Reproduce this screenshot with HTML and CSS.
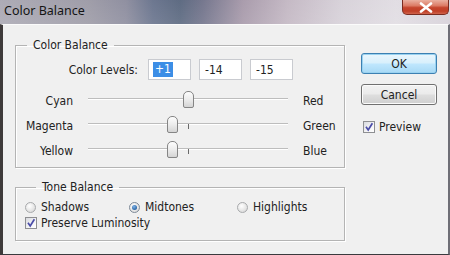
FILE: index.html
```html
<!DOCTYPE html>
<html>
<head>
<meta charset="utf-8">
<link rel="stylesheet" href="styles.css">
</head>
<body>
<div class="window">
  <div class="titlebar">
    <span class="title">Color Balance</span>
    <span class="close"><svg width="14" height="11" viewBox="0 0 14 11"><path d="M2 1.5 L12 9.5 M12 1.5 L2 9.5" stroke="#fff" stroke-width="2.6" stroke-linecap="round"/></svg></span>
  </div>
  <div class="client">
    <div class="main">
      <fieldset class="group cb">
        <legend>Color Balance</legend>
        <div class="levels">
          <span class="lvl-label">Color Levels:</span>
          <span class="field"><span class="sel">+1</span></span>
          <span class="field">-14</span>
          <span class="field">-15</span>
        </div>
        <div class="sliders">
          <span class="lab">Cyan</span>
          <div class="track"><span class="tick"></span><span class="thumb" style="left:95px"></span></div>
          <span class="rlab">Red</span>
          <span class="lab">Magenta</span>
          <div class="track"><span class="tick"></span><span class="thumb" style="left:79px"></span></div>
          <span class="rlab">Green</span>
          <span class="lab">Yellow</span>
          <div class="track"><span class="tick"></span><span class="thumb" style="left:79px"></span></div>
          <span class="rlab">Blue</span>
        </div>
      </fieldset>
      <fieldset class="group tb">
        <legend>Tone Balance</legend>
        <div class="radios">
          <span class="opt"><span class="radio"></span>Shadows</span>
          <span class="opt"><span class="radio on"></span>Midtones</span>
          <span class="opt"><span class="radio"></span>Highlights</span>
        </div>
        <div class="opt preserve"><span class="check"><svg width="10" height="10" viewBox="0 0 10 10"><path d="M2 4.8 L4.2 8 L8.4 1.2" fill="none" stroke="#4a4ca8" stroke-width="1.7"/></svg></span>Preserve Luminosity</div>
      </fieldset>
    </div>
    <div class="side">
      <div class="btn ok">OK</div>
      <div class="btn cancel">Cancel</div>
      <div class="opt preview"><span class="check"><svg width="10" height="10" viewBox="0 0 10 10"><path d="M2 4.8 L4.2 8 L8.4 1.2" fill="none" stroke="#4a4ca8" stroke-width="1.7"/></svg></span>Preview</div>
    </div>
  </div>
</div>
</body>
</html>
```

FILE: styles.css
```css
html, body {
  margin: 0;
  padding: 0;
}
body {
  width: 450px;
  height: 255px;
  overflow: hidden;
  font-family: "DejaVu Sans Condensed", "DejaVu Sans", sans-serif;
  font-stretch: condensed;
  font-size: 12px;
  color: #222222;
}
.window {
  width: 450px;
  height: 255px;
  display: flex;
  flex-direction: column;
  background: #55555a;
}
.titlebar {
  height: 24px;
  flex: none;
  display: flex;
  justify-content: space-between;
  align-items: flex-start;
  background:
    linear-gradient(180deg, rgba(255,255,255,0.05), rgba(255,255,255,0.12)),
    linear-gradient(90deg, #a9a7b2 0%, #9a98a4 20%, #8a8a9c 28%, #65708a 34%, #56647c 40%, #6e7088 45%, #a597a8 54%, #c2b6c2 64%, #d6d0d8 76%, #e0dce2 88%, #d6d0d8 100%);
}
.title {
  font-family: "Noto Sans", "Open Sans", sans-serif;
  font-stretch: normal;
  font-size: 12.5px;
  line-height: 16px;
  margin: 3px 0 0 4px;
  color: #141414;
}
.close {
  width: 47px;
  height: 15px;
  margin-right: 1px;
  box-sizing: border-box;
  border: 1px solid #7a2c20;
  border-top: none;
  border-radius: 0 0 5px 5px;
  background: linear-gradient(180deg, #eab0a0 0%, #dc7c66 40%, #c5452d 55%, #c04028 80%, #d0644c 100%);
  display: flex;
  align-items: center;
  justify-content: center;
}
.close svg { display: block; }
.client {
  flex: 1;
  display: flex;
  background: #f0f0f0;
  border-top: 1px solid #fbfbfb;
  border-left: 3px solid #3e3a3a;
  border-right: 2px solid #6e6e76;
  border-bottom: 1px solid #3a3a3e;
  padding: 13px 0 0 12px;
  box-sizing: border-box;
  gap: 16px;
}
.main {
  width: 330px;
  display: flex;
  flex-direction: column;
  gap: 12px;
}
.group {
  margin: 0;
  padding: 0;
  border: 1px solid #b4b4b4;
  box-shadow: inset 1px 1px 0 #ffffff, 1px 1px 0 #ffffff;
  min-width: 0;
}
.group legend {
  margin-left: 11px;
  padding: 0 6px;
  line-height: 14px;
  font-size: 12px;
}
.cb { padding-bottom: 4px; }
.levels {
  display: flex;
  align-items: center;
  margin-top: 7px;
  height: 21px;
}
.lvl-label {
  width: 122px;
  text-align: right;
  margin-right: 10px;
}
.field {
  width: 43px;
  height: 21px;
  box-sizing: border-box;
  background: #fff;
  border: 1px solid #c9cbd0;
  margin-right: 8px;
  padding-left: 5px;
  display: flex;
  align-items: center;
}
.sel {
  background: #3c8ee6;
  color: #fff;
  padding: 0 2px;
  line-height: 15px;
  margin-left: -1px;
}
.sliders {
  display: grid;
  grid-template-columns: 57px 200px auto;
  grid-auto-rows: 25px;
  column-gap: 15px;
  align-items: center;
  margin-top: 8px;
}
.lab { text-align: right; }
.track {
  position: relative;
  height: 0;
  border-top: 1px solid #bdbdbd;
  border-bottom: 1px solid #ffffff;
  top: -2px;
}
.tick {
  position: absolute;
  left: 100px;
  top: 0;
  width: 1px;
  height: 5px;
  background: #6a6a6a;
}
.thumb {
  position: absolute;
  top: -8px;
  width: 11px;
  height: 17px;
  box-sizing: border-box;
  border: 1px solid #858585;
  border-radius: 5px 5px 2px 2px;
  background: linear-gradient(180deg, #fdfdfd 0%, #ececec 50%, #d4d4d4 100%);
}
.tb {
  padding-bottom: 9px;
  padding-left: 9px;
}
.radios {
  display: grid;
  grid-template-columns: 104px 108px auto;
  margin-top: 5px;
}
.opt {
  display: flex;
  align-items: center;
  height: 16px;
}
.radio {
  width: 11px;
  height: 11px;
  box-sizing: border-box;
  border-radius: 50%;
  border: 1px solid #a8aaac;
  background: radial-gradient(circle at 40% 35%, #ffffff 0%, #e4e4e4 60%, #d2d2d2 100%);
  margin-right: 5px;
  display: flex;
  align-items: center;
  justify-content: center;
}
.radio.on { border-color: #7e8a98; }
.radio.on::after {
  content: "";
  width: 5px;
  height: 5px;
  border-radius: 50%;
  background: radial-gradient(circle at 40% 35%, #7fb4e8 0%, #1f5a9c 80%);
}
.check {
  width: 12px;
  height: 12px;
  box-sizing: border-box;
  border: 1px solid #8e8f92;
  background: linear-gradient(135deg, #d8dadf 0%, #f4f4f6 60%, #ffffff 100%);
  margin-right: 4px;
  display: flex;
  align-items: center;
  justify-content: center;
}
.check svg { display: block; }
.side {
  width: 76px;
  display: flex;
  flex-direction: column;
  padding-top: 15px;
}
.btn {
  height: 21px;
  box-sizing: border-box;
  border-radius: 3px;
  display: flex;
  align-items: center;
  justify-content: center;
  font-size: 12px;
}
.ok {
  border: 1px solid #3c80b2;
  box-shadow: inset 0 0 0 1px #9ad2f0;
  background: linear-gradient(180deg, #eaf6fd 0%, #d9f0fc 45%, #bee6fd 55%, #a7d9f5 100%);
}
.cancel {
  margin-top: 10px;
  border: 1px solid #707070;
  box-shadow: inset 0 0 0 1px #fbfbfb;
  background: linear-gradient(180deg, #f2f2f2 0%, #ebebeb 45%, #dddddd 55%, #cfcfcf 100%);
}
.preview {
  margin-top: 14px;
  padding-left: 2px;
}
```
